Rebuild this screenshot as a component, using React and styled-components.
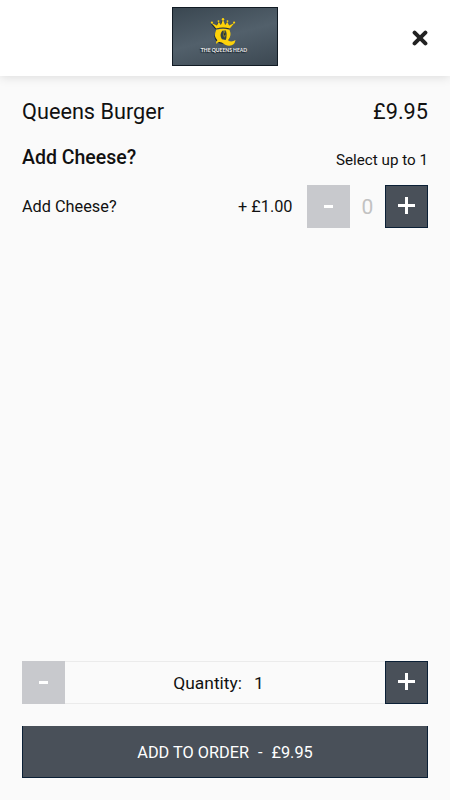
import styled, { createGlobalStyle } from "styled-components";

export default function App() {
  return (
    <>
      <GlobalStyle />
      <Page>
        <Header>
          <Logo />
          <CloseButton aria-label="Close">
            <svg width="16" height="16" viewBox="0 0 16 16">
              <path d="M2.6 2.6L13.4 13.4M13.4 2.6L2.6 13.4" stroke="#222" strokeWidth="4" strokeLinecap="round" />
            </svg>
          </CloseButton>
        </Header>
        <Content>
          <TitleRow>
            <span>Queens Burger</span>
            <span>£9.95</span>
          </TitleRow>
          <GroupRow>
            <GroupName>Add Cheese?</GroupName>
            <GroupHint>Select up to 1</GroupHint>
          </GroupRow>
          <OptionRow>
            <OptionName>Add Cheese?</OptionName>
            <OptionPrice>+ £1.00</OptionPrice>
            <StepButton disabled aria-label="Remove cheese"><Minus /></StepButton>
            <OptionCount>0</OptionCount>
            <StepButton aria-label="Add cheese"><Plus /></StepButton>
          </OptionRow>
        </Content>
        <Footer>
          <QuantityBar>
            <StepButton disabled aria-label="Decrease quantity"><Minus /></StepButton>
            <QuantityLabel><span>Quantity:</span><span>1</span></QuantityLabel>
            <StepButton aria-label="Increase quantity"><Plus /></StepButton>
          </QuantityBar>
          <OrderButton><span>ADD TO ORDER</span><span>-</span><span>£9.95</span></OrderButton>
        </Footer>
      </Page>
    </>
  );
}

function Logo() {
  return (
    <LogoBox>
      <svg width="30" height="31" viewBox="1.5 0.5 30 31">
        <g fill="#06101c" transform="translate(-0.8 0.8)" opacity="0.7">
          <path d="M8.6 11L4 5.5L9.4 8L11.2 4.5L13.4 7.5L15.5 2L17.6 7.5L19.8 4.5L21.6 8L27 5.5L22.4 11Q15.5 9 8.6 11Z" />
          <ellipse cx="15.5" cy="18" rx="7.8" ry="7.5" />
        </g>
        <g fill="#fdd20a">
          <path d="M8.6 11L4 5.5L9.4 8L11.2 4.5L13.4 7.5L15.5 2L17.6 7.5L19.8 4.5L21.6 8L27 5.5L22.4 11Q15.5 9 8.6 11Z" />
          <circle cx="4.4" cy="5" r="1.1" />
          <circle cx="11" cy="3.6" r="0.9" />
          <circle cx="15.5" cy="1.7" r="1.2" />
          <circle cx="20" cy="3.6" r="0.9" />
          <circle cx="26.6" cy="5" r="1.1" />
          <path d="M8.8 12.3Q15.4 10.2 22 12.3Q24.6 18.5 20.6 22.8Q23.8 25.4 28 22.6Q27 28.7 21.2 28.3C17 28 15 24.4 11.8 24.6Q9.6 24.8 9.3 26.5Q7.6 24.6 9.9 22.8Q5.7 18.6 8.8 12.3Z" />
        </g>
        <path d="M14.7 13.3Q11.5 17.6 14.4 21.8L18.2 22.4Q20 18.3 18.4 13Z" fill="#34414a" />
        <path d="M15.7 13.8L18 13.6L17.2 16L18.4 18.2L16.7 20.2L15.4 17.8Z" fill="#8b7d20" />
        <path d="M16.2 14.5L17.5 16.7L16.5 18.5Z" fill="#111d2b" />
      </svg>
      <LogoText>THE QUEENS HEAD</LogoText>
    </LogoBox>
  );
}

function Plus() {
  return (
    <svg width="17" height="17" viewBox="0 0 17 17">
      <path d="M8.5 0V17M0 8.5H17" stroke="#fff" strokeWidth="3" />
    </svg>
  );
}

function Minus() {
  return (
    <svg width="9" height="17" viewBox="0 0 9 17">
      <path d="M0 9.5H9" stroke="#fff" strokeWidth="3" />
    </svg>
  );
}

const GlobalStyle = createGlobalStyle`
  * {
    box-sizing: border-box;
  }

  body {
    margin: 0;
    background-color: #fafafa;
    color: #111;
    font-family: Roboto, "Liberation Sans", sans-serif;
  }

  button {
    padding: 0;
    border: 0;
    font-family: inherit;
  }
`

const Page = styled.div`
  display: flex;
  flex-direction: column;
  height: 100vh;
`

const Header = styled.header`
  display: grid;
  grid-template-columns: 1fr 106px 1fr;
  align-items: center;
  height: 76px;
  padding: 0 22px 3px;
  background-color: #fff;
  box-shadow: 0 1px 10px rgba(0, 0, 0, 0.13);

  > :first-child {
    grid-column: 2;
  }
`

const LogoBox = styled.div`
  display: flex;
  flex-direction: column;
  align-items: center;
  height: 59px;
  padding: 10px 2px 0 0;
  border: 1px solid #111b24;
  background: linear-gradient(165deg, #3a4751, #52606b 50%, #3c4852);
`

const LogoText = styled.span`
  margin-top: -2px;
  color: #eee;
  font-family: Lato, sans-serif;
  font-size: 5px;
  font-weight: 700;
  line-height: 6px;
  white-space: nowrap;
  text-shadow: -1px 1px 1px #111b24;
`

const CloseButton = styled.button`
  display: flex;
  justify-self: end;
  margin-top: 3px;
  background: none;
`

const Content = styled.main`
  flex: 1;
  padding: 21px 22px 0;
`

const TitleRow = styled.div`
  display: flex;
  justify-content: space-between;
  font-size: 21.7px;
  line-height: 30px;
`

const GroupRow = styled.div`
  display: flex;
  align-items: center;
  justify-content: space-between;
  height: 30px;
  margin-top: 15px;
`

const GroupName = styled.h2`
  margin: 0;
  font-size: 19.5px;
  font-weight: 500;
`

const GroupHint = styled.span`
  padding-top: 5px;
  font-size: 15.2px;
`

const OptionRow = styled.div`
  display: flex;
  align-items: center;
  margin-top: 13px;
  font-size: 16.3px;
`

const OptionName = styled.span`
  flex: 1;
`

const OptionPrice = styled.span`
  margin-right: 14.5px;
`

const OptionCount = styled.span`
  width: 35px;
  color: #c2c2c2;
  font-size: 21px;
  text-align: center;
`

const StepButton = styled.button`
  display: flex;
  flex: none;
  align-items: center;
  justify-content: center;
  width: 43px;
  height: 43px;
  padding-bottom: 2px;
  border: 1px solid ${({ disabled }) => (disabled ? "#c8c9cd" : "#0b2036")};
  background-color: ${({ disabled }) => (disabled ? "#c8c9cd" : "#495059")};
`

const Footer = styled.footer`
  padding: 0 22px 22px;
`

const QuantityBar = styled.div`
  display: flex;
  height: 43px;
`

const QuantityLabel = styled.div`
  display: flex;
  flex: 1;
  align-items: center;
  justify-content: center;
  gap: 12px;
  padding-right: 13px;
  border: solid #ebebeb;
  border-width: 1px 0;
  font-size: 17.4px;
`

const OrderButton = styled.button`
  display: flex;
  align-items: center;
  justify-content: center;
  gap: 9px;
  width: 100%;
  height: 52px;
  margin-top: 22px;
  padding-top: 1px;
  border: solid #0b2036;
  border-width: 0 1px 1px;
  background-color: #495059;
  color: #fff;
  font-size: 16.3px;
`
